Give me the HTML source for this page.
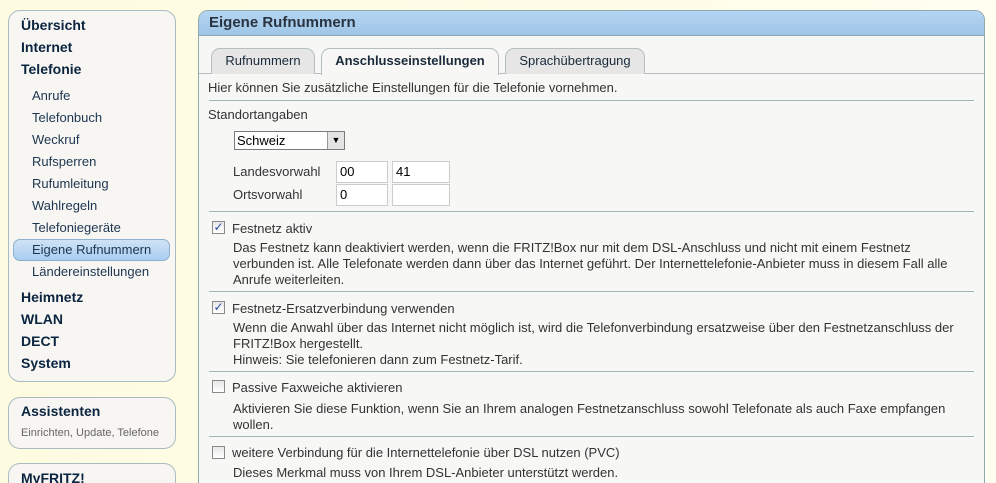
<!DOCTYPE html>
<html style="width:996px;height:483px;overflow:hidden"><head><meta charset="utf-8"><style>
*{margin:0;padding:0;box-sizing:border-box}
body{width:996px;height:483px;overflow:hidden;background:linear-gradient(90deg,#fdfbe0,#fffde8 60%,#fffef0);font-family:"Liberation Sans",sans-serif;font-size:13px;color:#333;position:relative}
.a{position:absolute;white-space:nowrap}
.box{position:absolute;background:#f7f6f3;border:1px solid #a9bcbf;border-radius:12px}
.nb{font-weight:bold;font-size:14px;color:#0b2440;left:21px}
.ns{font-size:13px;color:#1d3550;left:32px}
.sep{position:absolute;left:209px;width:765px;height:1px;background:#a3b4b6}
.cb{position:absolute;left:212px;width:13px;height:13px;border:1px solid #8a8a8a;background:linear-gradient(#e8e8e8,#fff)}
.tab{position:absolute;top:48px;height:26px;border:1px solid #b5bfc1;border-bottom:none;border-radius:9px 9px 0 0;background:#e6e6e6;text-align:center;line-height:24px;color:#1a2a3a}
.inp{position:absolute;height:22px;background:#fff;border:1px solid #ccc;padding-left:3px;line-height:20px;color:#000;font-size:13px}
</style></head><body>
<div class="box" style="left:8px;top:10px;width:168px;height:372px"></div>
<div class="a nb" style="top:17px">Übersicht</div>
<div class="a nb" style="top:39px">Internet</div>
<div class="a nb" style="top:61px">Telefonie</div>
<div class="a ns" style="top:88px">Anrufe</div>
<div class="a ns" style="top:110px">Telefonbuch</div>
<div class="a ns" style="top:132px">Weckruf</div>
<div class="a ns" style="top:154px">Rufsperren</div>
<div class="a ns" style="top:176px">Rufumleitung</div>
<div class="a ns" style="top:198px">Wahlregeln</div>
<div class="a ns" style="top:220px">Telefoniegeräte</div>
<div class="a" style="left:13px;top:239px;width:157px;height:22px;border:1px solid #8fb0cc;border-radius:7px;background:linear-gradient(#cfe3f6,#a9cdf0)"></div>
<div class="a ns" style="top:242px">Eigene Rufnummern</div>
<div class="a ns" style="top:264px">Ländereinstellungen</div>
<div class="a nb" style="top:289px">Heimnetz</div>
<div class="a nb" style="top:311px">WLAN</div>
<div class="a nb" style="top:333px">DECT</div>
<div class="a nb" style="top:355px">System</div>
<div class="box" style="left:8px;top:397px;width:168px;height:52px"></div>
<div class="a nb" style="top:403px">Assistenten</div>
<div class="a" style="left:21px;top:427px;font-size:11px;color:#666">Einrichten, Update, Telefone</div>
<div class="box" style="left:8px;top:463px;width:168px;height:40px"></div>
<div class="a nb" style="top:470px">MyFRITZ!</div>

<div class="a" style="left:198px;top:10px;width:787px;height:490px;border:1px solid #8fa9ad;border-radius:10px 10px 0 0;background:#f7f7f6"></div>
<div class="a" style="left:199px;top:11px;width:785px;height:25px;border-radius:9px 9px 0 0;background:linear-gradient(#b4d5f3,#9fc6e6);border-bottom:1px solid #8fa9ad"></div>
<div class="a" style="left:209px;top:14px;font-size:15px;font-weight:bold;color:#2a3340">Eigene Rufnummern</div>
<div class="a" style="left:199px;top:73px;width:785px;height:1px;background:#b5bfc1"></div>
<div class="tab" style="left:211px;width:104px">Rufnummern</div>
<div class="tab" style="left:321px;width:178px;background:#f7f7f6;height:27px;font-weight:bold">Anschlusseinstellungen</div>
<div class="tab" style="left:505px;width:140px">Sprachübertragung</div>
<div class="a" style="left:208px;top:80px">Hier können Sie zusätzliche Einstellungen für die Telefonie vornehmen.</div>
<div class="sep" style="top:100px"></div>
<div class="a" style="left:208px;top:107px">Standortangaben</div>
<div class="a" style="left:234px;top:131px;width:111px;height:19px;border:1px solid #7a7a7a;background:#fff"></div>
<div class="a" style="left:237px;top:133px;color:#000">Schweiz</div>
<div class="a" style="left:327px;top:132px;width:17px;height:17px;background:#e4e4e4;border-left:1px solid #999;font-size:9px;text-align:center;line-height:17px;color:#000">▼</div>
<div class="a" style="left:233px;top:164px">Landesvorwahl</div>
<div class="a" style="left:233px;top:187px">Ortsvorwahl</div>
<div class="inp" style="left:336px;top:161px;width:52px">00</div>
<div class="inp" style="left:392px;top:161px;width:58px">41</div>
<div class="inp" style="left:336px;top:184px;width:52px">0</div>
<div class="inp" style="left:392px;top:184px;width:58px"></div>
<div class="sep" style="top:211px"></div>
<div class="cb" style="top:221px;color:#2a4aa0;font-size:12px;line-height:11px;text-align:center">✓</div>
<div class="a" style="left:232px;top:221px">Festnetz aktiv</div>
<div class="a" style="left:233px;top:240px;line-height:16px">Das Festnetz kann deaktiviert werden, wenn die FRITZ!Box nur mit dem DSL-Anschluss und nicht mit einem Festnetz<br>verbunden ist. Alle Telefonate werden dann über das Internet geführt. Der Internettelefonie-Anbieter muss in diesem Fall alle<br>Anrufe weiterleiten.</div>
<div class="sep" style="top:291px"></div>
<div class="cb" style="top:301px;color:#2a4aa0;font-size:12px;line-height:11px;text-align:center">✓</div>
<div class="a" style="left:232px;top:301px">Festnetz-Ersatzverbindung verwenden</div>
<div class="a" style="left:233px;top:320px;line-height:16px">Wenn die Anwahl über das Internet nicht möglich ist, wird die Telefonverbindung ersatzweise über den Festnetzanschluss der<br>FRITZ!Box hergestellt.<br>Hinweis: Sie telefonieren dann zum Festnetz-Tarif.</div>
<div class="sep" style="top:371px"></div>
<div class="cb" style="top:380px"></div>
<div class="a" style="left:232px;top:380px">Passive Faxweiche aktivieren</div>
<div class="a" style="left:233px;top:401px;line-height:16px">Aktivieren Sie diese Funktion, wenn Sie an Ihrem analogen Festnetzanschluss sowohl Telefonate als auch Faxe empfangen<br>wollen.</div>
<div class="sep" style="top:436px"></div>
<div class="cb" style="top:446px"></div>
<div class="a" style="left:232px;top:445px">weitere Verbindung für die Internettelefonie über DSL nutzen (PVC)</div>
<div class="a" style="left:233px;top:465px">Dieses Merkmal muss von Ihrem DSL-Anbieter unterstützt werden.</div>
</body></html>
